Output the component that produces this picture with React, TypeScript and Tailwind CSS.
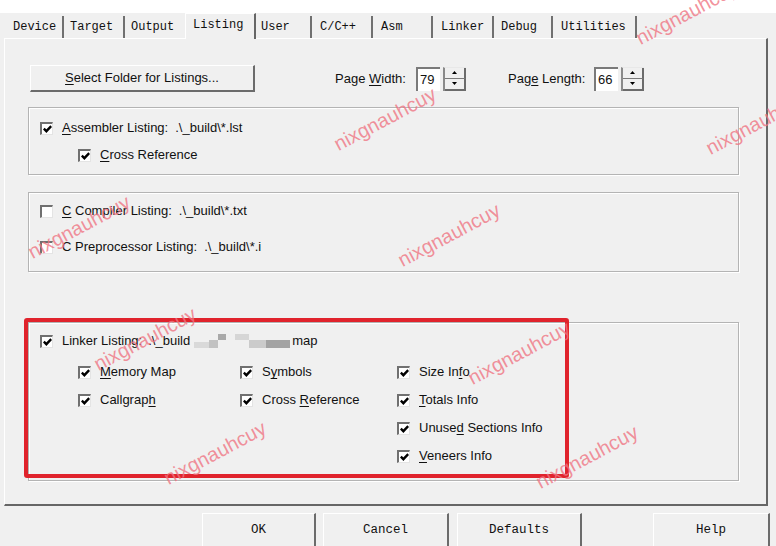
import React from 'react';

const tabs = [
  { label: 'Device', cls: 'w-[56px] pl-[5px] border-r-2' },
  { label: 'Target', cls: 'w-[61px] pl-[6px] border-r-2' },
  { label: 'Output', cls: 'w-[60px] pl-[6px]' },
  { label: 'Listing', cls: 'w-[71px] pl-[7px] border-r-2', active: true },
  { label: 'User', cls: 'w-[56px] pl-[5px] border-r-2' },
  { label: 'C/C++', cls: 'w-[61px] pl-[8px] border-r-2' },
  { label: 'Asm', cls: 'w-[60px] pl-[8px] border-r-2' },
  { label: 'Linker', cls: 'w-[61px] pl-[8px] border-r-2' },
  { label: 'Debug', cls: 'w-[59px] pl-[7px] border-r-2' },
  { label: 'Utilities', cls: 'w-[84px] pl-[8px] border-r-2' },
];

// watermark stamps sitting over the dialog
const marks = [
  'left-[642px] top-[28px]',
  'left-[340px] top-[134px]',
  'left-[712px] top-[138px]',
  'left-[34px] top-[242px]',
  'left-[404px] top-[250px]',
  'left-[100px] top-[354px]',
  'left-[170px] top-[468px]',
  'left-[474px] top-[368px]',
  'left-[542px] top-[472px]',
  'left-[282px] top-[596px]',
];

const Check = ({ on = true }: { on?: boolean }) => (
  <span className="w-[13px] h-[13px] shrink-0 bg-white border-t-2 border-l-2 border-t-[#707070] border-l-[#707070] border-r border-b border-r-[#e4e4e4] border-b-[#e4e4e4] flex items-center justify-center">
    {on && (
      <svg width="9" height="8" viewBox="0 0 9 8">
        <path d="M0.8 3.6 L3.4 6.2 L8.2 1.2" stroke="#000" strokeWidth="2.4" fill="none" />
      </svg>
    )}
  </span>
);

const U = ({ children }: { children: React.ReactNode }) => (
  <span className="underline underline-offset-[2px] decoration-1">{children}</span>
);

const Opt = ({ on = true, children, className = '' }: { on?: boolean; children: React.ReactNode; className?: string }) => (
  <div className={`flex items-center h-[20px] gap-[9px] ${className}`}>
    <Check on={on} />
    <span className="whitespace-nowrap">{children}</span>
  </div>
);

const Spin = () => (
  <div className="ml-[3px] w-[23px] h-[24px] flex flex-col border-l-2 border-t border-l-[#8a8a8a] border-t-[#e8e8e8]">
    <div className="flex-1 flex items-center justify-center border-r-2 border-b border-r-[#6b6b6b] border-b-[#7a7a7a]">
      <svg width="5" height="3" viewBox="0 0 5 3"><path d="M0 3 L2.5 0 L5 3 Z" fill="#000" /></svg>
    </div>
    <div className="flex-1 flex items-center justify-center border-r-2 border-b-2 border-r-[#6b6b6b] border-b-[#6b6b6b]">
      <svg width="5" height="3" viewBox="0 0 5 3"><path d="M0 0 L2.5 3 L5 0 Z" fill="#000" /></svg>
    </div>
  </div>
);

const Field = ({ value }: { value: string }) => (
  <div className="w-[24px] h-[24px] bg-white border-t-2 border-l-2 border-t-[#7a7a7a] border-l-[#7a7a7a] pl-[2px] flex items-center">
    {value}
  </div>
);

const Group = ({ className, children }: { className: string; children: React.ReactNode }) => (
  <div className={`w-[711px] border border-[#b4b4b4] shadow-[inset_1px_1px_0_#ffffff,1px_1px_0_#ffffff] pl-[11px] ${className}`}>
    {children}
  </div>
);

const WinButton = ({ label, className }: { label: string; className: string }) => (
  <div className={`h-[36px] flex items-center justify-center border-t border-l border-white border-r-2 border-b-2 border-r-[#6b6b6b] border-b-[#6b6b6b] font-['Liberation_Mono',monospace] text-[12.5px] ${className}`}>
    {label}
  </div>
);

export default function App() {
  return (
    <div className="relative w-[776px] h-[546px] overflow-hidden bg-[#f0f0f0] text-[#111] font-['Liberation_Sans',Arial,sans-serif] text-[13px]">
      <div className="h-[13px] bg-white" />

      {/* tab strip */}
      <div className="flex items-end h-[25px] pl-[8px] font-['Liberation_Mono',monospace] text-[12px]">
        {tabs.map((t) =>
          t.active ? (
            <div key={t.label} className={`relative z-10 h-[26px] -mb-[1px] pb-[3px] flex items-center bg-[#f0f0f0] border-l border-t border-l-white border-t-white border-r-[#666666] ${t.cls}`}>
              {t.label}
            </div>
          ) : (
            <div key={t.label} className={`h-[22px] flex items-center border-r-[#707070] ${t.cls}`}>
              {t.label}
            </div>
          )
        )}
      </div>

      {/* tab page */}
      <div className="ml-[4px] w-[764px] h-[468px] border-l border-t border-white border-r-2 border-b-2 border-r-[#666666] border-b-[#666666] pl-[23px] pt-[26px] flex flex-col">
        <div className="flex items-center h-[27px]">
          <div className="ml-[2px] w-[225px] h-[27px] flex items-center justify-center border-t border-l border-white border-r-2 border-b-2 border-r-[#6b6b6b] border-b-[#6b6b6b]">
            <U>S</U>elect Folder for Listings...
          </div>
          <span className="ml-[80px] w-[81px]">Page <U>W</U>idth:</span>
          <Field value="79" />
          <Spin />
          <span className="ml-[42px] w-[86px]">Pag<U>e</U> Length:</span>
          <Field value="66" />
          <Spin />
        </div>

        <Group className="mt-[15px] h-[68px] pt-[10px] flex flex-col gap-[7px]">
          <Opt>
            <U>A</U>ssembler Listing:<span className="ml-[7px]">.\_build\*.lst</span>
          </Opt>
          <Opt className="ml-[38px]">
            <U>C</U>ross Reference
          </Opt>
        </Group>

        <Group className="mt-[17px] h-[80px] pt-[8px] flex flex-col gap-[16px]">
          <Opt on={false}>
            <U>C</U> Compiler Listing:<span className="ml-[7px]">.\_build\*.txt</span>
          </Opt>
          <Opt on={false}>
            C Preprocessor Listing:<span className="ml-[7px]">.\_build\*.i</span>
          </Opt>
        </Group>

        <Group className="mt-[50px] h-[159px] pt-[8px] flex flex-col">
          <Opt>
            <span className="inline-flex items-center">
              Linker Listing:<span className="ml-[6px]">.\_build</span>
              <span className="ml-[4px] inline-flex h-[14px] w-[96px]">
                <span className="self-end w-[15px] h-[6px] bg-[#d9d9d9]" />
                <span className="self-end w-[9px] h-[8px] bg-[#c2c2c2]" />
                <span className="self-start w-[8px] h-[6px] bg-[#a9a9a9]" />
                <span className="w-[9px]" />
                <span className="self-start w-[14px] h-[6px] bg-[#d6d6d6]" />
                <span className="self-end w-[17px] h-[8px] bg-[#cbcbcb]" />
                <span className="self-end w-[24px] h-[8px] bg-[#a3a3a3]" />
              </span>
              <span className="ml-[2px]">map</span>
            </span>
          </Opt>
          <div className="mt-[11px] ml-[38px] grid grid-cols-[162px_157px_1fr] gap-y-[8px]">
            <Opt><U>M</U>emory Map</Opt>
            <Opt>S<U>y</U>mbols</Opt>
            <Opt>Size In<U>f</U>o</Opt>
            <Opt>Callgrap<U>h</U></Opt>
            <Opt>Cross <U>R</U>eference</Opt>
            <Opt><U>T</U>otals Info</Opt>
            <div />
            <div />
            <Opt>Unuse<U>d</U> Sections Info</Opt>
            <div />
            <div />
            <Opt><U>V</U>eneers Info</Opt>
          </div>
        </Group>
      </div>

      {/* dialog buttons */}
      <div className="flex mt-[7px]">
        <WinButton label="OK" className="ml-[202px] w-[114px]" />
        <WinButton label="Cancel" className="ml-[7px] w-[126px]" />
        <WinButton label="Defaults" className="ml-[8px] w-[125px]" />
        <WinButton label="Help" className="ml-[71px] w-[117px]" />
      </div>

      {/* red highlight frame */}
      <div className="absolute left-[24px] top-[318px] w-[545px] h-[160px] border-4 border-[#e0232c] rounded-[3px] pointer-events-none" />

      {marks.map((m) => (
        <span
          key={m}
          className={`absolute ${m} origin-bottom-left -rotate-[28deg] text-[20px] leading-[20px] text-[#ef7583]/80 font-['Liberation_Sans',Arial,sans-serif] pointer-events-none whitespace-nowrap`}
        >
          nixgnauhcuy
        </span>
      ))}
    </div>
  );
}
